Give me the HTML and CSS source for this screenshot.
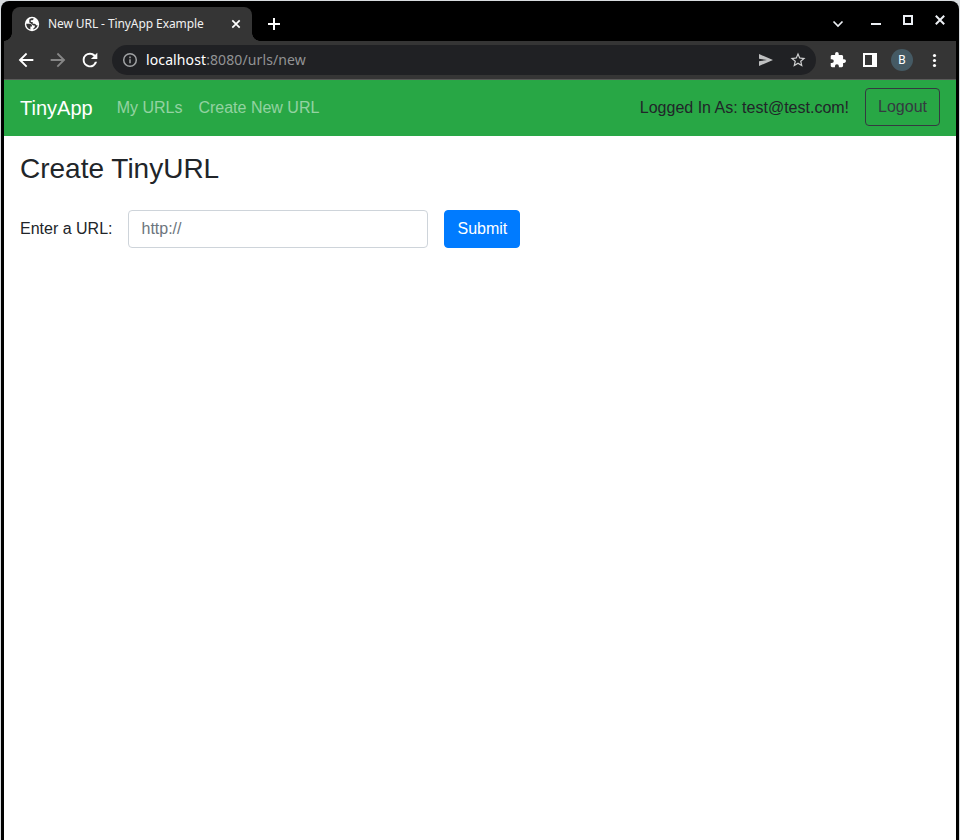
FILE: index.html
```html
<!DOCTYPE html>
<html lang="en">
<head>
<meta charset="utf-8">
<title>New URL - TinyApp Example</title>
<link rel="stylesheet" href="styles.css">
</head>
<body>
<div class="window">
  <div class="tabstrip">
    <div class="tab">
      <svg class="favicon" viewBox="0 0 16 16"><circle cx="8" cy="8" r="7.2" fill="#fff"/><path d="M2.200 7.800H5.600C7 7.800 8 8.500 8 9.800V10.600H6.400V13.500C3.900 12.900 2.200 10.700 2.200 7.800ZM9.600 2.400C9.600 3.600 9 4.200 7.600 4.200H6.800V6.100H8.700V7.800H10.400C11.500 7.800 12 8.700 12 9.300H13.700C13 11.600 11.700 12.900 9.400 13.500V12.200C10.400 12 10.800 11.300 10.800 10.500V9.500H9.500C8.800 9.500 8.300 9 8 8.300L5.300 6.600V3.600C6.300 2.500 8 2.100 9.600 2.400Z" fill="#353535"/></svg>
      <span class="tab-title">New URL - TinyApp Example</span>
      <svg class="tab-close" viewBox="0 0 16 16"><path d="M4.3 4.3l7.4 7.4M11.7 4.3l-7.4 7.4"/></svg>
    </div>
    <svg class="new-tab" viewBox="0 0 16 16"><path d="M8 2v12M2 8h12"/></svg>
    <div class="window-buttons">
      <svg class="chevron" viewBox="0 0 16 16"><path d="M3.5 5.500l4.5 4.5L12.5 5.500"/></svg>
      <svg viewBox="0 0 16 16"><path d="M3 12h10"/></svg>
      <svg viewBox="0 0 16 16"><path d="M4 4h8v8H4z"/></svg>
      <svg viewBox="0 0 16 16"><path d="M3.8 3.8l8.4 8.4M12.2 3.8l-8.4 8.4"/></svg>
    </div>
  </div>
  <div class="toolbar">
    <svg class="tool" viewBox="0 0 24 24"><path d="M20 10.8H8.1l5.2-5.2L12 4 4 12l8 8 1.4-1.5-5.3-5.3H20z"/></svg>
    <svg class="tool dim" viewBox="0 0 24 24"><path d="M4 10.8h11.9l-5.2-5.2L12 4l8 8-8 8-1.4-1.5 5.3-5.3H4z"/></svg>
    <svg class="tool" viewBox="0 0 24 24"><path d="M17.65 6.35A7.96 7.96 0 0 0 12 4a8 8 0 1 0 7.73 10h-2.4A5.8 5.8 0 1 1 12 6.2c1.6 0 3 .7 4.1 1.7L13 11h7V4z"/></svg>
    <div class="omnibox">
      <svg class="info" viewBox="0 0 16 16"><circle cx="8" cy="8" r="6.3"/><path d="M8 7.2v4M8 4.6v1.6"/></svg>
      <span class="address"><b>localhost</b>:8080/urls/new</span>
      <svg class="send" viewBox="0 0 16 16"><path d="M1 2v4.800L9 8 1 9.200v4.800L15 8z"/></svg>
      <svg class="star" viewBox="0 0 24 24"><path d="M22 9.24l-7.19-.62L12 2 9.19 8.63 2 9.24l5.46 4.73L5.82 21 12 17.27 18.18 21l-1.63-7.03zM12 15.4l-3.76 2.27 1-4.28-3.32-2.88 4.38-.38L12 6.1l1.71 4.04 4.38.38-3.32 2.88 1 4.28z"/></svg>
    </div>
    <div class="actions">
      <svg class="puzzle" viewBox="1 1 22 22"><path d="M20.5 11H19V7c0-1.100-.9-2-2-2h-4V3.500a2.500 2.500 0 0 0-5 0V5H4a2 2 0 0 0-2 2v3.800h1.500a2.700 2.700 0 0 1 0 5.400H2V20c0 1.100.9 2 2 2h3.800v-1.500a2.700 2.700 0 0 1 5.400 0V22H17c1.100 0 2-.9 2-2v-4h1.500a2.500 2.500 0 0 0 0-5z"/></svg>
      <svg class="panel" viewBox="0 0 16 16"><path fill-rule="evenodd" d="M1 1h14v14H1zM3 3v10h7V3z"/></svg>
      <span class="avatar">B</span>
      <svg class="dots" viewBox="0 0 16 16"><circle cx="8.500" cy="3.500" r="1.600"/><circle cx="8.500" cy="8.500" r="1.600"/><circle cx="8.500" cy="13.500" r="1.600"/></svg>
    </div>
  </div>
  <div class="page">
    <nav class="navbar">
      <a class="brand">TinyApp</a>
      <a class="nav-link">My URLs</a>
      <a class="nav-link">Create New URL</a>
      <span class="account">Logged In As: test@test.com!</span>
      <button class="btn btn-outline">Logout</button>
    </nav>
    <main>
      <h3>Create TinyURL</h3>
      <form class="form">
        <label for="url">Enter a URL:</label>
        <input id="url" type="text" placeholder="http://">
        <button type="button" class="btn btn-primary">Submit</button>
      </form>
    </main>
  </div>
</div>
</body>
</html>
```
FILE: styles.css
```css
* { box-sizing: border-box; }
body { margin: 0; background: #d8dcdf; overflow: hidden; }
svg { display: block; flex: none; }
.window {
  height: 840px;
  margin: 1px 1px 0;
  padding: 0 3px;
  display: flex;
  flex-direction: column;
  background: #000;
  border-radius: 8px 8px 0 0;
  font-family: "Noto Sans", sans-serif;
}
.tabstrip {
  height: 40px;
  padding: 6px 8px 0;
  display: flex;
  flex: none;
}
.tab {
  position: relative;
  width: 240px;
  height: 34px;
  padding: 0 8px 0 12px;
  display: flex;
  align-items: center;
  background: #353535;
  border-radius: 8px 8px 0 0;
  color: #f1f1f1;
  font-size: 12px;
}
.tab::before, .tab::after {
  content: "";
  position: absolute;
  bottom: 0;
  width: 8px;
  height: 8px;
}
.tab::before { left: -8px; background: radial-gradient(circle at 0 0, #000 7.5px, #353535 8px); }
.tab::after { right: -8px; background: radial-gradient(circle at 100% 0, #000 7.5px, #353535 8px); }
.favicon { width: 16px; height: 16px; margin-right: 8px; }
.tab-title { flex: 1; white-space: nowrap; line-height: 16px; letter-spacing: -.09px; }
.tab-close { width: 16px; height: 16px; }
.tab-close path { stroke: #fff; stroke-width: 1.7; }
.new-tab { width: 16px; height: 16px; margin: 9px 0 0 14px; }
.new-tab path { stroke: #fff; stroke-width: 2; }
.window-buttons { margin: 5px 0 0 auto; display: flex; gap: 16px; }
.window-buttons svg { width: 16px; height: 16px; }
.window-buttons path { fill: none; stroke: #eceff4; stroke-width: 2; }
.window-buttons .chevron { margin: 4px 6px 0 0; }
.window-buttons .chevron path { stroke-width: 1.7; }
.toolbar {
  height: 39px;
  flex: none;
  padding: 0 11px;
  display: flex;
  align-items: center;
  background: #353535;
  border-bottom: 1px solid #5a5a5a;
}
.tool { width: 22px; height: 22px; margin-right: 10px; fill: #fff; }
.dim { fill: #868686; }
.omnibox {
  width: 704px;
  height: 30px;
  margin-left: 1px;
  padding: 0 10px;
  display: flex;
  align-items: center;
  background: #202124;
  border-radius: 15px;
}
.info { width: 16px; height: 16px; margin-right: 8px; }
.info circle, .info path { fill: none; stroke: #a0a2a4; stroke-width: 1.5; }
.address { flex: 1; color: #929394; font-size: 14px; line-height: 20px; letter-spacing: .11px; }
.address b { color: #fff; font-weight: 400; }
.send { width: 16px; height: 16px; margin-right: 15px; fill: #bfc0c1; }
.star { width: 18px; height: 18px; margin-right: -1px; fill: #d0d1d2; }
.actions { display: flex; align-items: center; margin-left: 14px; fill: #fff; }
.puzzle { width: 16px; height: 16px; }
.panel { width: 16px; height: 16px; margin-left: 16px; }
.avatar {
  width: 22px;
  height: 22px;
  margin: 0 13px;
  border-radius: 50%;
  background: #455a64;
  color: #fff;
  font: 12px/22px Roboto, sans-serif;
  text-align: center;
}
.dots { width: 16px; height: 16px; }
.page {
  flex: 1;
  background: #fff;
  color: #212529;
  font: 16px/24px "Liberation Sans", Arial, sans-serif;
}
.navbar {
  height: 56px;
  padding: 8px 16px;
  display: flex;
  align-items: center;
  background: #28a745;
}
.brand { margin-right: 16px; padding-bottom: 1px; color: #fff; font-size: 20px; line-height: 30px; }
.nav-link { padding: 0 8px; color: rgba(255, 255, 255, .5); }
.account { margin-left: auto; margin-right: 16px; }
.btn {
  height: 38px;
  padding: 6px 12px;
  border: 1px solid;
  border-radius: 4px;
  font: inherit;
}
.btn-outline { margin-bottom: 2px; background: transparent; border-color: #343a40; color: #343a40; }
.btn-primary { background: #007bff; border-color: #007bff; color: #fff; }
main { padding: 16px; }
h3 { margin: 0 0 24px; font-size: 28px; font-weight: 500; line-height: 34px; }
.form { display: flex; align-items: center; gap: 16px; }
.form input {
  width: 300px;
  height: 38px;
  padding: 6px 12px;
  border: 1px solid #ced4da;
  border-radius: 4px;
  color: #495057;
  font: inherit;
}
.form input::placeholder { color: #6c757d; opacity: 1; }
```
